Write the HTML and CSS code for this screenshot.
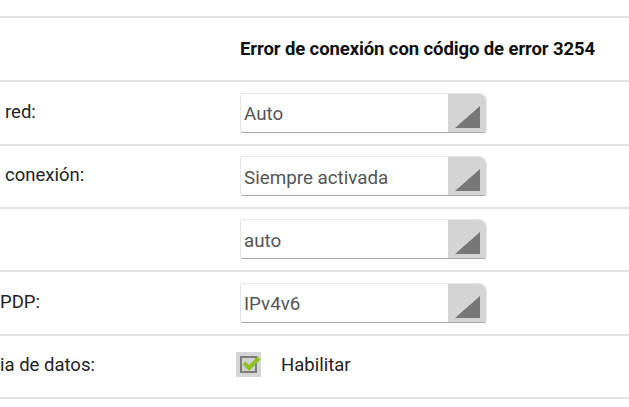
FILE: index.html
```
<!DOCTYPE html>
<html lang="es">
<head>
<meta charset="utf-8">
<link rel="stylesheet" href="styles.css">
</head>
<body>
<div class="page">
  <div class="table">
    <div class="row r64">
      <div class="label"></div>
      <div class="value"><span class="status">Error de conexión con código de error 3254</span></div>
    </div>
    <div class="row r64">
      <div class="label pad5">red:</div>
      <div class="value">
        <div class="select"><span class="sel-text">Auto</span><span class="arrow"><svg width="26" height="22" viewBox="0 0 26 22"><polygon points="25,0 25,22 0,22" fill="#777"/></svg></span></div>
      </div>
    </div>
    <div class="row r63">
      <div class="label pad5">conexión:</div>
      <div class="value">
        <div class="select"><span class="sel-text">Siempre activada</span><span class="arrow"><svg width="26" height="22" viewBox="0 0 26 22"><polygon points="25,0 25,22 0,22" fill="#777"/></svg></span></div>
      </div>
    </div>
    <div class="row r63">
      <div class="label"></div>
      <div class="value">
        <div class="select"><span class="sel-text">auto</span><span class="arrow"><svg width="26" height="22" viewBox="0 0 26 22"><polygon points="25,0 25,22 0,22" fill="#777"/></svg></span></div>
      </div>
    </div>
    <div class="row r64">
      <div class="label pad0">PDP:</div>
      <div class="value">
        <div class="select"><span class="sel-text">IPv4v6</span><span class="arrow"><svg width="26" height="22" viewBox="0 0 26 22"><polygon points="25,0 25,22 0,22" fill="#777"/></svg></span></div>
      </div>
    </div>
    <div class="row r63">
      <div class="label pad0">ia de datos:</div>
      <div class="value check-cell">
        <span class="checkbox"><span class="box"><svg width="22" height="18" viewBox="0 0 22 18"><polyline points="3,8 8,13 18,3" fill="none" stroke="#8dc21f" stroke-width="4" stroke-linejoin="miter"/></svg></span></span>
        <span class="check-label">Habilitar</span>
      </div>
    </div>
  </div>
</div>
</body>
</html>
```
FILE: styles.css
```
html, body {
  margin: 0;
  padding: 0;
  background: #fff;
  overflow: hidden;
}
.page {
  width: 629px;
  height: 407px;
  overflow: hidden;
  padding-top: 16px;
  box-sizing: border-box;
}
.table {
  border-bottom: 2px solid #e4e4e4;
}
.row {
  display: grid;
  grid-template-columns: 240px 1fr;
  border-top: 2px solid #e4e4e4;
  box-sizing: border-box;
  align-items: center;
}
.r64 { height: 64px; }
.r63 { height: 63px; }
.label {
  font-family: Roboto, "Liberation Sans", sans-serif;
  font-size: 18.5px;
  color: #222;
  white-space: nowrap;
  padding-bottom: 3px;
}
.pad5 { padding-left: 5px; }
.pad0 { padding-left: 0; }
.value {
  display: flex;
  align-items: center;
}
.status {
  font-family: Roboto, "Liberation Sans", sans-serif;
  font-weight: 700;
  font-size: 18.5px;
  color: #111;
  letter-spacing: -0.1px;
  margin-top: -1px;
}
.select {
  width: 247px;
  height: 40px;
  margin-top: -1px;
  display: flex;
  align-items: stretch;
  box-sizing: border-box;
  border: 1px solid #e6e6e6;
  border-bottom: 1px solid #a9a9a9;
  border-radius: 3px 8px 3px 3px;
  overflow: hidden;
  background: #fff;
}
.sel-text {
  flex: 1;
  display: flex;
  align-items: center;
  padding-left: 3px;
  padding-top: 3px;
  font-family: Roboto, "Liberation Sans", sans-serif;
  font-size: 18.8px;
  color: #555;
}
.arrow {
  width: 38px;
  background: #d4d4d4;
  display: flex;
  align-items: flex-end;
  justify-content: flex-end;
  padding: 0 5px 4px 0;
  box-sizing: border-box;
}
.arrow svg { display: block; }
.check-cell {
  gap: 20px;
  margin-left: -4px;
  margin-top: -4px;
}
.checkbox {
  width: 25px;
  height: 25px;
  background: #d6d6d6;
  display: flex;
  align-items: center;
  justify-content: center;
}
.box {
  width: 17px;
  height: 17px;
  border: 2px solid #7d7d7d;
  box-sizing: border-box;
  background: #d0d0d0;
  position: relative;
}
.box svg {
  position: absolute;
  left: -1px;
  top: -3px;
}
.check-label {
  font-family: Roboto, "Liberation Sans", sans-serif;
  font-size: 18.5px;
  color: #222;
}
```
